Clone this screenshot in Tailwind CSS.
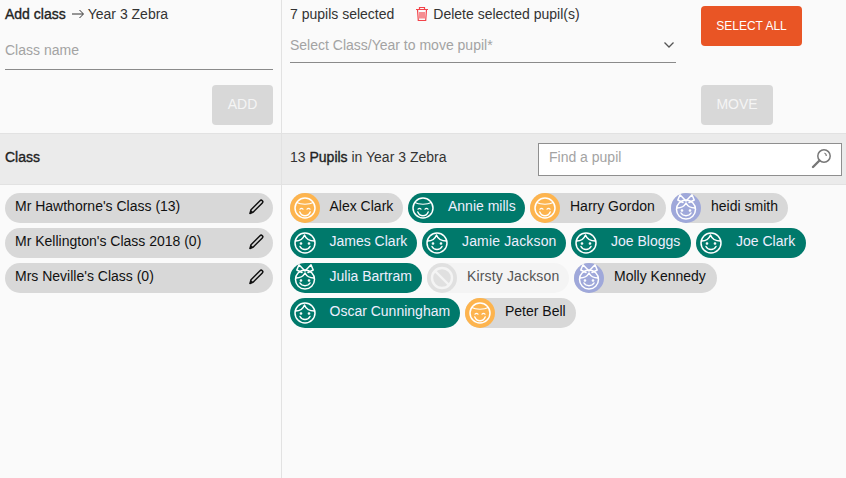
<!DOCTYPE html>
<html>
<head>
<meta charset="utf-8">
<script src="https://cdn.jsdelivr.net/npm/@tailwindcss/browser@4"></script>
</head>
<body class="bg-[#fafafa]">
<svg class="hidden">
<symbol id="a" viewBox="0 0 30 30"><g fill="none" stroke="#fff" stroke-linecap="round"><circle cx="15" cy="15" r="10" stroke-width="1.500"/><path d="M6.800 9.500C10.500 11.800 19.500 11.800 23.200 9.500" stroke-width="1.200"/><path d="M9.800 19c2 5 8.400 5 10.400 0" stroke-width="1.400"/><path d="M10 16.200q1.500-1.700 3 0M17 16.200q1.500-1.700 3 0" stroke-width="1.200"/></g></symbol>
<symbol id="b" viewBox="0 0 30 30"><g fill="none" stroke="#fff" stroke-width="1.500" stroke-linecap="round" stroke-linejoin="round"><circle cx="15" cy="15" r="10"/><path d="M5.500 13c4 0 7.500-2 9-6 1.500 4 6 6 10 6"/><path d="M10 18.500c2 4 8 4 10 0"/><circle cx="11" cy="15.500" r=".6"/><circle cx="19" cy="15.500" r=".6"/></g></symbol>
<symbol id="g" viewBox="0 0 30 30"><g fill="none" stroke="#fff" stroke-width="1.500" stroke-linecap="round" stroke-linejoin="round"><circle cx="15" cy="16.500" r="9.500"/><path d="M6 15c4.500 0 7.500-2 9-5 1.500 3 4.500 5 9 5"/><path d="M15 8 9 1.800 6.800 7 12 9.500M15 8 21 1.800 23.200 7 18 9.500"/><path d="M10 20c2 3.500 8 3.500 10 0"/><circle cx="11" cy="17.500" r=".6"/><circle cx="19" cy="17.500" r=".6"/></g></symbol>
<symbol id="p" viewBox="0 0 16 16"><path d="M2 14.500 3 10.700 12 1.700a1.600 1.600 0 0 1 2.300 2.300L5.300 13z" fill="none" stroke="#111" stroke-width="1.500" stroke-linejoin="round"/><path d="M1.500 15 2.800 11 5 13.200z" fill="#111"/></symbol>
</svg>
<div class="w-[846px] h-[478px] overflow-hidden flex flex-col font-['Liberation_Sans',Arial,sans-serif] text-[14px] text-[#333]">
  <div class="h-[134px] flex border-b border-[#e2e2e2] shrink-0">
    <div class="w-[282px] shrink-0 border-r border-[#e2e2e2] pl-[5px] pr-[8px] pt-[6px] flex flex-col">
      <div class="h-[16px] leading-[16px] flex items-center"><span class="[-webkit-text-stroke:0.35px_#222] text-[#222]">Add class</span><svg class="ml-[6px] mr-[4px]" width="12" height="10" viewBox="0 0 12 10" fill="none" stroke="#333" stroke-width="1"><path d="M0 5h11M7.500 1l4 4-4 4"/></svg><span>Year 3 Zebra</span></div>
      <div class="mt-[20px] h-[28px] border-b border-[#8a8a8a] text-[#a3a3a3] leading-[16px]">Class name</div>
      <button class="mt-[15px] self-end w-[61px] h-[40px] pb-[2px] rounded-[4px] bg-[#d8d8d8] text-[#f5f5f5]">ADD</button>
    </div>
    <div class="flex-1 flex pl-[8px] pt-[6px]">
      <div class="w-[386px] shrink-0">
        <div class="h-[16px] leading-[16px] flex items-center"><span>7 pupils selected</span><svg class="ml-[21px] mr-[4px]" width="14" height="16" viewBox="0 0 14 16" fill="none" stroke="#f2434a" stroke-width="1.200"><path d="M1 3.500h12M4.500 3.500V1.500h5v2M2.500 3.500l.8 11h7.400l.8-11M5 6v6.500M7 6v6.500M9 6v6.500"/></svg><span>Delete selected pupil(s)</span></div>
        <div class="mt-[9px] h-[32px] border-b border-[#8a8a8a] flex justify-between items-start pt-[6px] text-[#a3a3a3]"><span class="leading-[16px]">Select Class/Year to move pupil*</span><svg class="mt-[5px] mr-[2px]" width="10" height="6" viewBox="0 0 10 6" fill="none" stroke="#555" stroke-width="1.300"><path d="M.5.500 5 5 9.500.500"/></svg></div>
      </div>
      <div class="ml-[25px] flex flex-col">
        <button class="w-[101px] h-[40px] rounded-[4px] bg-[#e95525] text-white text-[12px]">SELECT ALL</button>
        <button class="mt-[39px] w-[72px] h-[40px] pb-[2px] rounded-[4px] bg-[#d8d8d8] text-[#f5f5f5]">MOVE</button>
      </div>
    </div>
  </div>
  <div class="h-[51px] flex bg-[#ebebeb] border-b border-[#e2e2e2] shrink-0">
    <div class="w-[282px] shrink-0 border-r border-[#e2e2e2] pl-[5px] pb-[4px] flex items-center [-webkit-text-stroke:0.35px_#222] text-[#222]">Class</div>
    <div class="flex-1 flex items-center justify-between pl-[8px] pr-[4px]">
      <div class="pb-[4px]"><span>13 </span><span class="[-webkit-text-stroke:0.35px_#222] text-[#222]">Pupils</span><span> in Year 3 Zebra</span></div>
      <div class="w-[304px] h-[33px] border border-[#8f8f8f] bg-white pl-[10px] pr-[9px] flex items-center justify-between text-[#a3a3a3]"><span class="pb-[3px]">Find a pupil</span>
        <svg class="mb-[2px]" width="21" height="21" viewBox="0 0 21 21" fill="none" stroke="#777"><circle cx="13" cy="8" r="6.200" stroke-width="1.500"/><path d="M8.500 12.500 2 19" stroke-width="2.400" stroke-linecap="round"/><path d="M13.500 5q2 .8 1.800 3" stroke-width="1.200"/></svg></div>
    </div>
  </div>
  <div class="flex-1 flex min-h-0">
    <div class="w-[282px] shrink-0 border-r border-[#e2e2e2] pl-[5px] pr-[8px] pt-[8px] flex flex-col gap-[5px] text-[#111]">
      <div class="h-[30px] rounded-[15px] bg-[#d8d8d8] pl-[10px] pr-[9px] flex items-center justify-between"><span class="pb-[3px]">Mr Hawthorne's Class (13)</span><svg class="mb-[3px]" width="16" height="16"><use href="#p"/></svg></div>
      <div class="h-[30px] rounded-[15px] bg-[#d8d8d8] pl-[10px] pr-[9px] flex items-center justify-between"><span class="pb-[3px]">Mr Kellington's Class 2018 (0)</span><svg class="mb-[3px]" width="16" height="16"><use href="#p"/></svg></div>
      <div class="h-[30px] rounded-[15px] bg-[#d8d8d8] pl-[10px] pr-[9px] flex items-center justify-between"><span class="pb-[3px]">Mrs Neville's Class (0)</span><svg class="mb-[3px]" width="16" height="16"><use href="#p"/></svg></div>
    </div>
    <div class="flex-1 pl-[8px] pt-[8px] flex flex-wrap content-start gap-[5px]">
      <div class="w-[113px] h-[30px] rounded-[15px] bg-[#d8d8d8] text-[#111] flex items-center"><span class="w-[30px] h-[30px] rounded-full bg-[#fdb44e] shrink-0"><svg width="30" height="30"><use href="#a"/></svg></span><span class="ml-[9.5px] pb-[3px] whitespace-nowrap">Alex Clark</span></div>
      <div class="w-[117px] h-[30px] rounded-[15px] bg-[#00796b] text-[#eef] flex items-center"><span class="w-[30px] h-[30px] shrink-0"><svg width="30" height="30"><use href="#a"/></svg></span><span class="ml-[10px] pb-[3px] whitespace-nowrap">Annie mills</span></div>
      <div class="w-[136px] h-[30px] rounded-[15px] bg-[#d8d8d8] text-[#111] flex items-center"><span class="w-[30px] h-[30px] rounded-full bg-[#fdb44e] shrink-0"><svg width="30" height="30"><use href="#a"/></svg></span><span class="ml-[10px] pb-[3px] whitespace-nowrap">Harry Gordon</span></div>
      <div class="w-[117px] h-[30px] rounded-[15px] bg-[#d8d8d8] text-[#111] flex items-center"><span class="w-[30px] h-[30px] rounded-full bg-[#9fa8da] shrink-0"><svg width="30" height="30"><use href="#g"/></svg></span><span class="ml-[10px] pb-[3px] whitespace-nowrap">heidi smith</span></div>
      <div class="w-[127px] h-[30px] rounded-[15px] bg-[#00796b] text-[#eef] flex items-center"><span class="w-[30px] h-[30px] shrink-0"><svg width="30" height="30"><use href="#b"/></svg></span><span class="ml-[9.5px] pb-[3px] whitespace-nowrap">James Clark</span></div>
      <div class="w-[144px] h-[30px] rounded-[15px] bg-[#00796b] text-[#eef] flex items-center"><span class="w-[30px] h-[30px] shrink-0"><svg width="30" height="30"><use href="#b"/></svg></span><span class="ml-[10px] pb-[3px] whitespace-nowrap tracking-[0.15px]">Jamie Jackson</span></div>
      <div class="w-[120px] h-[30px] rounded-[15px] bg-[#00796b] text-[#eef] flex items-center"><span class="w-[30px] h-[30px] shrink-0"><svg width="30" height="30"><use href="#b"/></svg></span><span class="ml-[10px] pb-[3px] whitespace-nowrap">Joe Bloggs</span></div>
      <div class="w-[110px] h-[30px] rounded-[15px] bg-[#00796b] text-[#eef] flex items-center"><span class="w-[30px] h-[30px] shrink-0"><svg width="30" height="30"><use href="#b"/></svg></span><span class="ml-[10px] pb-[3px] whitespace-nowrap">Joe Clark</span></div>
      <div class="w-[132px] h-[30px] rounded-[15px] bg-[#00796b] text-[#eef] flex items-center"><span class="w-[30px] h-[30px] shrink-0"><svg width="30" height="30"><use href="#g"/></svg></span><span class="ml-[9.5px] pb-[3px] whitespace-nowrap">Julia Bartram</span></div>
      <div class="w-[142px] h-[30px] rounded-[15px] bg-[#f4f4f4] text-[#555] flex items-center"><span class="w-[30px] h-[30px] rounded-full bg-[#e0e0e0] shrink-0"><svg width="30" height="30" viewBox="0 0 30 30" fill="none" stroke="#f4f4f4" stroke-width="2.400"><circle cx="15" cy="15" r="10"/><path d="M8 8 22 22"/></svg></span><span class="ml-[10px] pb-[3px] whitespace-nowrap tracking-[0.15px]">Kirsty Jackson</span></div>
      <div class="w-[143px] h-[30px] rounded-[15px] bg-[#d8d8d8] text-[#111] flex items-center"><span class="w-[30px] h-[30px] rounded-full bg-[#9fa8da] shrink-0"><svg width="30" height="30"><use href="#g"/></svg></span><span class="ml-[10px] pb-[3px] whitespace-nowrap">Molly Kennedy</span></div>
      <div class="w-[170px] h-[30px] rounded-[15px] bg-[#00796b] text-[#eef] flex items-center"><span class="w-[30px] h-[30px] shrink-0"><svg width="30" height="30"><use href="#b"/></svg></span><span class="ml-[9.5px] pb-[3px] whitespace-nowrap">Oscar Cunningham</span></div>
      <div class="w-[111px] h-[30px] rounded-[15px] bg-[#d8d8d8] text-[#111] flex items-center"><span class="w-[30px] h-[30px] rounded-full bg-[#fdb44e] shrink-0"><svg width="30" height="30"><use href="#a"/></svg></span><span class="ml-[10px] pb-[3px] whitespace-nowrap">Peter Bell</span></div>
    </div>
  </div>
</div>
</body>
</html>
